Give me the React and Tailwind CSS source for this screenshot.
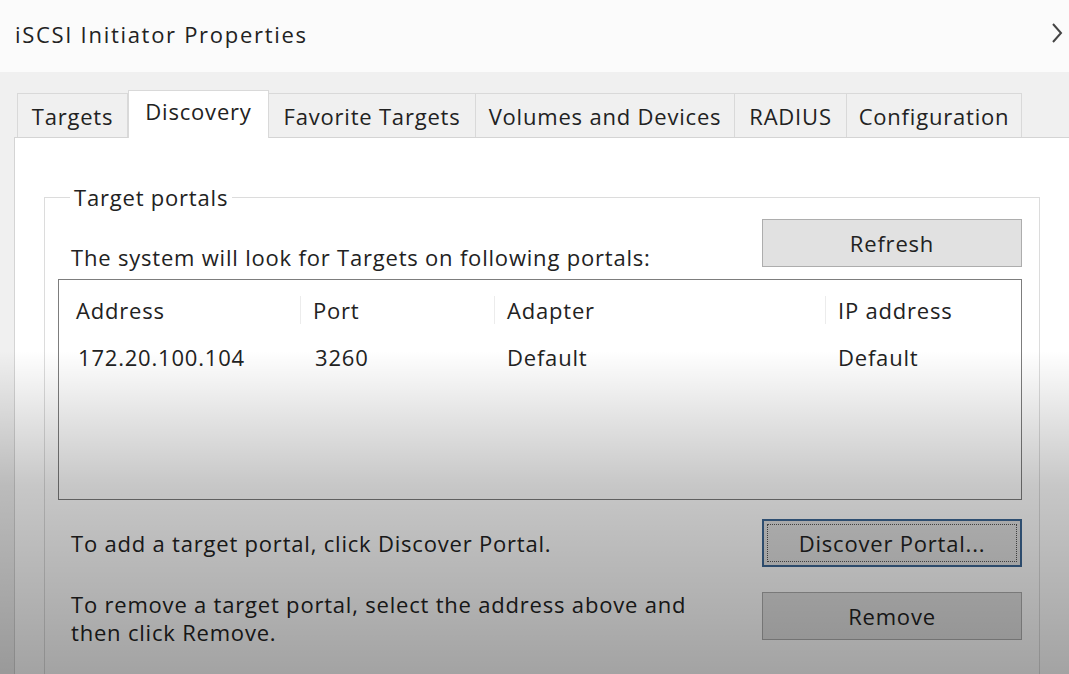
const tabs = [
  { label: "Targets", w: "w-[111px]" },
  { label: "Discovery", w: "w-[141px]", active: true },
  { label: "Favorite Targets", w: "w-[207px]" },
  { label: "Volumes and Devices", w: "w-[259px]" },
  { label: "RADIUS", w: "w-[112px]" },
  { label: "Configuration", w: "w-[175px]" },
];

const WinButton = ({ children, focused }) => (
  <div
    className={`flex h-[48px] w-[260px] shrink-0 items-center justify-center bg-[#e1e1e1] ${
      focused ? "border-2 border-[#3d6795] p-[3px]" : "border border-[#adadad]"
    }`}
  >
    {focused ? (
      <div className="flex h-full w-full items-center justify-center border border-dotted border-[#555]">{children}</div>
    ) : (
      children
    )}
  </div>
);

export default function App() {
  return (
    <div className="relative h-[674px] w-[1069px] overflow-hidden bg-[#fbfbfb] font-['Open_Sans',sans-serif] text-[22px] font-[500] leading-[28px] tracking-[0.8px] text-[#222]">
      {/* Title bar */}
      <div className="flex h-[72px] items-center justify-between pb-[4px] pl-[15px] pr-[6px]">
        <span className="tracking-[1.7px]">iSCSI Initiator Properties</span>
        <svg width="12" height="22" viewBox="0 0 12 22" className="mb-[2px]">
          <polyline points="2,2 10,11 2,20" fill="none" stroke="#444" strokeWidth="2" />
        </svg>
      </div>

      {/* Tab control */}
      <div className="bg-[#f0f0f0] pl-[14px]">
        <div className="flex h-[65px] items-end pl-[3px]">
          {tabs.map((t) =>
            t.active ? (
              <div
                key={t.label}
                className={`${t.w} relative z-10 -mb-px flex h-[48px] items-start justify-center border border-b-0 border-[#d9d9d9] bg-white pt-[6px]`}
              >
                {t.label}
              </div>
            ) : (
              <div
                key={t.label}
                className={`${t.w} flex h-[44px] items-center justify-center border border-b-0 border-l-0 border-[#d9d9d9] bg-[#f0f0f0] pt-[1px] first:border-l`}
              >
                {t.label}
              </div>
            )
          )}
        </div>

        <div className="border-l border-t border-[#d4d4d4] bg-white pb-[40px] pl-[29px] pr-[29px] pt-[45px]">
          <fieldset className="border border-[#dcdcdc] pb-[40px] pl-[13px] pr-[17px]">
            <legend className="ml-[12px] px-[4px]">Target portals</legend>

            <div className="mt-[8px] flex items-end justify-between">
              <span className="mb-[-4px] ml-[13px]">The system will look for Targets on following portals:</span>
              <WinButton>Refresh</WinButton>
            </div>

            <div className="mt-[12px] h-[221px] border border-[#7d7d7d] bg-white pt-[16px]">
              <div className="grid grid-cols-[242px_194px_331px_1fr]">
                <div className="border-r border-[#ececec] pl-[17px]">Address</div>
                <div className="border-r border-[#ececec] pl-[12px]">Port</div>
                <div className="border-r border-[#ececec] pl-[12px]">Adapter</div>
                <div className="pl-[12px]">IP address</div>
              </div>
              <div className="mt-[19px] grid grid-cols-[242px_194px_331px_1fr]">
                <div className="pl-[19px]">172.20.100.104</div>
                <div className="pl-[14px]">3260</div>
                <div className="pl-[12px]">Default</div>
                <div className="pl-[12px]">Default</div>
              </div>
            </div>

            <div className="mt-[19px] flex items-center justify-between">
              <span className="ml-[13px]">To add a target portal, click Discover Portal.</span>
              <WinButton focused>Discover Portal...</WinButton>
            </div>

            <div className="mt-[25px] flex items-start justify-between">
              <p className="ml-[13px] mt-[-2px]">
                To remove a target portal, select the address above and
                <br />
                then click Remove.
              </p>
              <WinButton>Remove</WinButton>
            </div>
          </fieldset>
        </div>
      </div>

      {/* photographic shading over the whole shot */}
      <div className="pointer-events-none absolute inset-0 bg-[linear-gradient(to_bottom,rgba(0,0,0,0)_0%,rgba(0,0,0,0)_52%,rgba(0,0,0,0.22)_72%,rgba(0,0,0,0.36)_100%)]" />
    </div>
  );
}
